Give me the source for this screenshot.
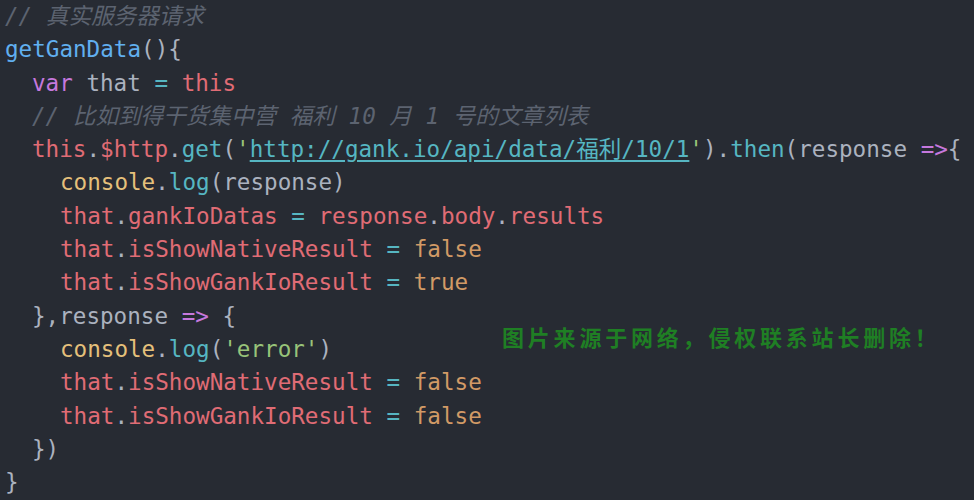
import React from 'react';

const C = {
  com: 'text-[#5c6370] italic',
  fn: 'text-[#61afef]',
  kw: 'text-[#c678dd]',
  red: 'text-[#e06c75]',
  cyan: 'text-[#56b6c2]',
  yel: 'text-[#e5c07b]',
  num: 'text-[#d19a66]',
  str: 'text-[#98c379]',
  txt: 'text-[#abb2bf]',
};

// each line: indent level + list of [text, colorKey]
const lines = [
  [0, [['// 真实服务器请求', 'com']]],
  [0, [['getGanData', 'fn'], ['(){', 'txt']]],
  [1, [['var', 'kw'], [' that ', 'txt'], ['=', 'cyan'], [' ', 'txt'], ['this', 'red']]],
  [1, [['// 比如到得干货集中营 福利 10 月 1 号的文章列表', 'com']]],
  [1, [['this', 'red'], ['.', 'txt'], ['$http', 'red'], ['.', 'txt'], ['get', 'cyan'], ['(', 'txt'], ["'", 'str'], ['URL', 'url'], ["'", 'str'], [').', 'txt'], ['then', 'cyan'], ['(response ', 'txt'], ['=>', 'kw'], ['{', 'txt']]],
  [2, [['console', 'yel'], ['.', 'txt'], ['log', 'cyan'], ['(response)', 'txt']]],
  [2, [['that', 'red'], ['.', 'txt'], ['gankIoDatas', 'red'], [' ', 'txt'], ['=', 'cyan'], [' ', 'txt'], ['response', 'red'], ['.', 'txt'], ['body', 'red'], ['.', 'txt'], ['results', 'red']]],
  [2, [['that', 'red'], ['.', 'txt'], ['isShowNativeResult', 'red'], [' ', 'txt'], ['=', 'cyan'], [' ', 'txt'], ['false', 'num']]],
  [2, [['that', 'red'], ['.', 'txt'], ['isShowGankIoResult', 'red'], [' ', 'txt'], ['=', 'cyan'], [' ', 'txt'], ['true', 'num']]],
  [1, [['},response ', 'txt'], ['=>', 'kw'], [' {', 'txt']]],
  [2, [['console', 'yel'], ['.', 'txt'], ['log', 'cyan'], ['(', 'txt'], ["'error'", 'str'], [')', 'txt']]],
  [2, [['that', 'red'], ['.', 'txt'], ['isShowNativeResult', 'red'], [' ', 'txt'], ['=', 'cyan'], [' ', 'txt'], ['false', 'num']]],
  [2, [['that', 'red'], ['.', 'txt'], ['isShowGankIoResult', 'red'], [' ', 'txt'], ['=', 'cyan'], [' ', 'txt'], ['false', 'num']]],
  [1, [['})', 'txt']]],
  [0, [['}', 'txt']]],
];

const indents = ['pl-[5px]', 'pl-[32px]', 'pl-[60px]'];

export default function App() {
  return (
    <div className="relative w-[974px] h-[500px] overflow-hidden bg-[#272b33] font-['DejaVu_Sans_Mono','Noto_Sans_CJK_SC',monospace] text-[22.6px] leading-[33.3px] whitespace-pre">
      {lines.map(([lvl, toks], i) => (
        <div key={i} className={indents[lvl]}>
          {toks.map(([t, k], j) =>
            k === 'url' ? (
              <span key={j} className="text-[#56b6c2] underline underline-offset-[3px]">http://gank.io/api/data/福利/10/1</span>
            ) : (
              <span key={j} className={C[k]}>{t}</span>
            )
          )}
        </div>
      ))}
      <div className="absolute left-[502px] top-[321px] text-[#1f7f24] font-bold text-[22px] leading-[30px] tracking-[3.8px] font-['Noto_Sans_CJK_SC',sans-serif]">
        图片来源于网络，侵权联系站长删除！
      </div>
    </div>
  );
}
